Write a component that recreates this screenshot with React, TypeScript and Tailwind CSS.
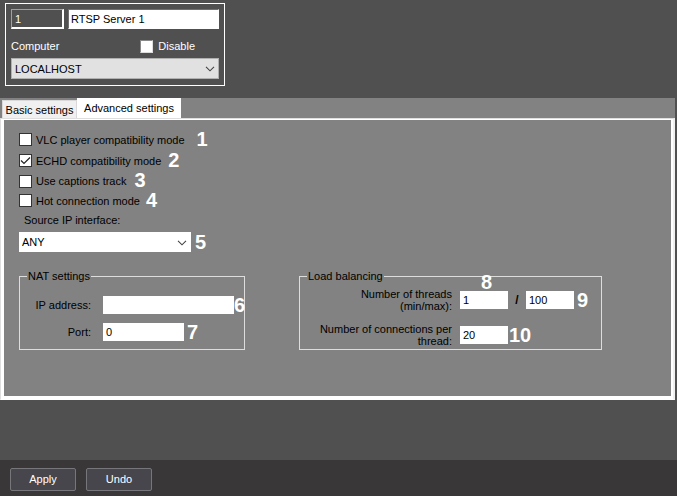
import React from 'react';

const Marker: React.FC<{ value: number; className?: string }> = ({ value, className = '' }) => (
  <span className={`text-[20px] leading-[20px] font-bold text-white ${className}`}>{value}</span>
);

const Chevron: React.FC<{ className?: string }> = ({ className = '' }) => (
  <svg
    viewBox="0 0 10 6"
    className={`pointer-events-none absolute h-[6px] w-[10px] ${className}`}
    fill="none"
    stroke="#444444"
    strokeWidth="1.1"
  >
    <path d="M1 0.8 L5 4.8 L9 0.8" />
  </svg>
);

const modes = [
  { id: 'vlc', label: 'VLC player compatibility mode', marker: 1, checked: false, row: 'h-[21px]', gap: 'ml-[12px]' },
  { id: 'echd', label: 'ECHD compatibility mode', marker: 2, checked: true, row: 'h-[21px]', gap: 'ml-[7px]' },
  { id: 'captions', label: 'Use captions track', marker: 3, checked: false, row: 'h-[20px]', gap: 'ml-[8px]' },
  { id: 'hot', label: 'Hot connection mode', marker: 4, checked: false, row: 'h-[19px]', gap: 'ml-[6px]' },
];

const field = 'h-[18px] shrink-0 bg-white px-[3px] text-[11px] text-black outline-none';

const App: React.FC = () => {
  return (
    <div className="flex min-h-screen flex-col bg-[#505050] font-['Liberation_Sans',Arial,sans-serif] text-[11px] leading-[14px] text-black">
      <header className="mt-[3px] ml-[5px] flex w-[220px] flex-col border border-white px-[5px] pt-[5px] pb-[6px]">
        <div className="flex gap-1">
          <input
            aria-label="Number"
            readOnly
            defaultValue="1"
            className="h-[20px] w-[53px] border border-t-[#a0a0a0] border-r-2 border-b-2 border-l-[#a0a0a0] border-r-white border-b-white bg-transparent px-[3px] text-white outline-none"
          />
          <input
            aria-label="Name"
            defaultValue="RTSP Server 1"
            className="h-[20px] min-w-0 flex-1 border border-t-[#707070] border-r-white border-b-white border-l-[#707070] bg-white px-[2px] outline-none"
          />
        </div>
        <div className="mt-[9px] flex h-[16px] items-center justify-between text-white">
          <label htmlFor="computer">Computer</label>
          <label className="flex items-center gap-[5px] pr-[24px]">
            <input
              type="checkbox"
              className="size-[13px] appearance-none border border-t-[#888888] border-r-[#dddddd] border-b-[#dddddd] border-l-[#888888] bg-white"
            />
            Disable
          </label>
        </div>
        <div className="relative mt-[4px]">
          <select
            id="computer"
            className="block h-[21px] w-full appearance-none border border-[#b0b0b0] bg-[#e1e1e1] px-[3px] text-black outline-none"
          >
            <option>LOCALHOST</option>
          </select>
          <Chevron className="top-[8px] right-[4px]" />
        </div>
      </header>

      <main className="mt-[12px] mr-[2px] bg-[#828282]">
        <div role="tablist" className="flex h-[20px] items-end pl-[2px]">
          <button role="tab" aria-selected="false" className="h-[18px] w-[75px] border border-b-0 border-[#d9d9d9] bg-[#f0f0f0] text-center leading-[18px] whitespace-nowrap">
            Basic settings
          </button>
          <button role="tab" aria-selected="true" className="h-[20px] w-[104px] bg-white pb-[1px] text-center leading-[18px] whitespace-nowrap">
            Advanced settings
          </button>
        </div>

        <div className="border border-r-2 border-[#dedede] border-r-[#f0f0f0] border-b-white">
          <div className="border-t border-r-2 border-b-[3px] border-l-[3px] border-white pt-[9px] pr-[15px] pb-[46px] pl-[15px]">
            {modes.map((mode) => (
              <div key={mode.id} className={`flex items-center ${mode.row}`}>
                <label className="flex items-center gap-[4px]">
                  <span className="relative flex">
                    <input
                      type="checkbox"
                      defaultChecked={mode.checked}
                      className="peer size-[13px] appearance-none border border-[#333333] bg-white"
                    />
                    <svg
                      viewBox="0 0 13 13"
                      className="pointer-events-none absolute inset-0 hidden size-[13px] peer-checked:block"
                      fill="none"
                      stroke="#222222"
                      strokeWidth="1.2"
                    >
                      <path d="M2 6.5 L5 9.5 L11 3.5" />
                    </svg>
                  </span>
                  {mode.label}
                </label>
                <Marker value={mode.marker} className={`pb-[2px] ${mode.gap}`} />
              </div>
            ))}

            <label htmlFor="source-ip" className="mt-[3px] ml-[5px] block">
              Source IP interface:
            </label>
            <div className="mt-[5px] flex items-center gap-[4px]">
              <div className="relative w-[172px]">
                <select id="source-ip" className="block h-[20px] w-full appearance-none bg-white px-[3px] text-black outline-none">
                  <option>ANY</option>
                </select>
                <Chevron className="top-[8px] right-[4px]" />
              </div>
              <Marker value={5} />
            </div>

            <div className="mt-[17px] flex items-stretch gap-[54px]">
              <fieldset className="w-[226px] border border-[#dddddd] pl-[7px]">
                <legend className="px-[1px] leading-[14px]">NAT settings</legend>
                <div className="mt-[13px] flex items-center">
                  <label htmlFor="nat-ip" className="w-[64px] text-right whitespace-nowrap">IP address:</label>
                  <input id="nat-ip" className={`${field} ml-[12px] w-[131px]`} />
                  <Marker value={6} className="-my-[1px] -mr-[4px]" />
                </div>
                <div className="mt-[9px] flex items-center">
                  <label htmlFor="nat-port" className="w-[64px] text-right">Port:</label>
                  <input id="nat-port" defaultValue="0" className={`${field} ml-[12px] w-[81px]`} />
                  <Marker value={7} className="-my-[1px] ml-[3px]" />
                </div>
              </fieldset>

              <fieldset className="relative w-[303px] border border-[#dddddd] pb-[2px] pl-[7px]">
                <legend className="px-[1px] leading-[14px]">Load balancing</legend>
                <div className="mt-[5px] flex items-center">
                  <label htmlFor="threads-min" className="w-[145px] text-right leading-[12px]">
                    Number of threads
                    <br />
                    (min/max):
                  </label>
                  <input id="threads-min" defaultValue="1" className={`${field} ml-[8px] w-[48px]`} />
                  <span className="w-[18px] text-center text-[12px] font-bold">/</span>
                  <input aria-label="Maximum number of threads" defaultValue="100" className={`${field} w-[48px]`} />
                  <Marker value={9} className="ml-[3px]" />
                </div>
                <div className="mt-[11px] flex items-center">
                  <label htmlFor="connections" className="w-[145px] text-right leading-[12px] whitespace-nowrap">
                    Number of connections per
                    <br />
                    thread:
                  </label>
                  <input id="connections" defaultValue="20" className={`${field} ml-[8px] w-[48px]`} />
                  <Marker value={10} className="ml-[1px]" />
                </div>
                <Marker value={8} className="absolute -top-[11px] left-[181px]" />
              </fieldset>
            </div>
          </div>
        </div>
      </main>

      <footer className="mt-auto flex gap-[10px] bg-[#3a3738] px-[10px] pt-[8px] pb-[5px]">
        <button className="h-[23px] w-[66px] rounded-[2px] border border-[#77777b] bg-[#47464c] pb-[2px] text-white">Apply</button>
        <button className="h-[23px] w-[66px] rounded-[2px] border border-[#77777b] bg-[#47464c] pb-[2px] text-white">Undo</button>
      </footer>
    </div>
  );
};

export default App;
